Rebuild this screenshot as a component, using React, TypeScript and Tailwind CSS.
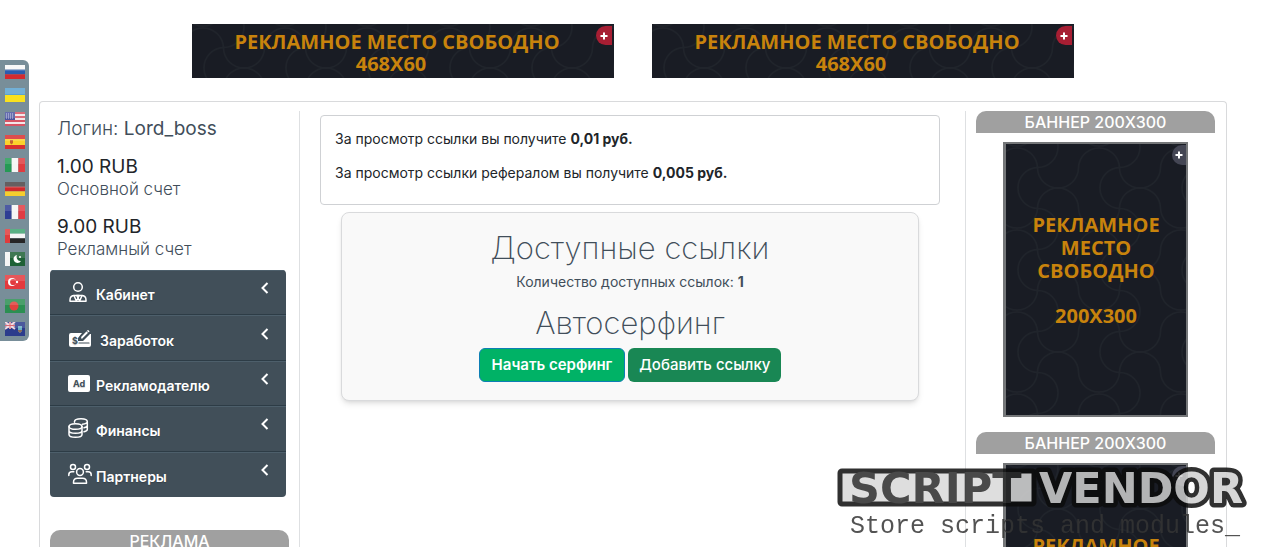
import { useId } from "react";
import type { ReactNode } from "react";

function Stripes({ colors, vertical = false }: { colors: string[]; vertical?: boolean }) {
  const size = (vertical ? 20 : 14) / colors.length;
  return (
    <>
      {colors.map((color, i) => (
        <rect
          key={i}
          x={vertical ? i * size : 0}
          y={vertical ? 0 : i * size}
          width={vertical ? size : 20}
          height={vertical ? 14 : size}
          fill={color}
        />
      ))}
    </>
  );
}

const flags: { name: string; art: ReactNode }[] = [
  { name: "Русский", art: <Stripes colors={["#f7f7f7", "#2b5cae", "#d42a2f"]} /> },
  { name: "Українська", art: <Stripes colors={["#5aa3d0", "#f9e11e"]} /> },
  {
    name: "English",
    art: (
      <>
        <Stripes colors={["#d65464", "#f3e6e8", "#d65464", "#f3e6e8", "#d65464", "#f3e6e8", "#d65464"]} />
        <rect width="10" height="8" fill="#4c55a0" />
        <path d="M1 2h8M1 4h8M1 6h8" stroke="#c9cde8" strokeDasharray="1 1" />
      </>
    ),
  },
  {
    name: "Español",
    art: (
      <>
        <rect width="20" height="14" fill="#d8302f" />
        <rect y="4" width="20" height="6" fill="#fbd12b" />
        <path d="M5 5h3v3l-1.500 1.500L5 8z" fill="#c4622f" />
      </>
    ),
  },
  { name: "Italiano", art: <Stripes vertical colors={["#259a55", "#f5f5f5", "#df3c40"]} /> },
  { name: "Deutsch", art: <Stripes colors={["#4b4446", "#cf2b2d", "#f6ce2d"]} /> },
  { name: "Français", art: <Stripes vertical colors={["#2f3f94", "#f5f5f5", "#df3c44"]} /> },
  {
    name: "العربية",
    art: (
      <>
        <Stripes colors={["#3ea36f", "#f5f5f5", "#262626"]} />
        <rect width="5" height="14" fill="#e03c3c" />
      </>
    ),
  },
  {
    name: "اردو",
    art: (
      <>
        <rect width="20" height="14" fill="#1d6136" />
        <rect width="5" height="14" fill="#f5f5f5" />
        <path d="M12 3a4 4 0 1 0 4 6 4.200 4.200 0 0 1-4-6z" fill="#fff" />
        <circle cx="15" cy="5" r="1" fill="#fff" />
      </>
    ),
  },
  {
    name: "Türkçe",
    art: (
      <>
        <rect width="20" height="14" fill="#e23a3e" />
        <circle cx="7" cy="7" r="4" fill="#fff" />
        <circle cx="8.200" cy="7" r="3.100" fill="#e23a3e" />
        <circle cx="12" cy="7" r="1.200" fill="#fff" />
      </>
    ),
  },
  {
    name: "বাংলা",
    art: (
      <>
        <rect width="20" height="14" fill="#2b8f52" />
        <circle cx="9" cy="7" r="4.500" fill="#e0423f" />
      </>
    ),
  },
  {
    name: "Montserrat",
    art: (
      <>
        <rect width="20" height="14" fill="#2b3c8c" />
        <path d="M0 0l10 7M10 0L0 7M5 0v7M0 3.500h10" stroke="#f0d5dc" strokeWidth="2" />
        <path d="M5 0v7M0 3.500h10" stroke="#d4525f" />
        <path d="M13 4h4v5l-2 2-2-2z" fill="#6cb0c4" />
        <path d="M13 8h4v1l-2 2-2-2z" fill="#8a6a55" />
      </>
    ),
  },
];

function Icon({ width, children }: { width: number; children: ReactNode }) {
  return (
    <svg
      width={width}
      height="22"
      viewBox={`0 0 ${width} 22`}
      fill="none"
      stroke="#fff"
      strokeWidth="1.500"
      strokeLinecap="round"
      strokeLinejoin="round"
      aria-hidden="true"
    >
      {children}
    </svg>
  );
}

const menu = [
  {
    label: "Кабинет",
    icon: (
      <Icon width={24}>
        <circle cx="10" cy="6" r="4.300" />
        <path d="M2 20.200v-1.200c0-3 2-4.500 4.500-4.500h7c2.500 0 4.500 1.500 4.500 4.500v1.200z" />
        <path d="M6 14.500l2.300 5.500L10 17l1.700 3L14 14.500M8.800 14.500h2.400L10 17z" />
      </Icon>
    ),
  },
  {
    label: "Заработок",
    icon: (
      <Icon width={28}>
        <path d="M3 6h11l-4 5v3h5l7-7h1v11q0 2-2 2H3q-2 0-2-2V8q0-2 2-2z" fill="#fff" stroke="none" />
        <path d="M12 12.500l.6-3L20 1.800l2.700 2.600-7.600 7.500z" fill="#fff" stroke="#414f59" />
        <path d="M18.300 3.700l2.500 2.500" stroke="#414f59" strokeWidth="1" />
        <path d="M11 16h10" stroke="#414f59" strokeWidth="1.200" />
        <text x="4" y="17" fill="#414f59" stroke="none" fontSize="9" fontWeight="700" fontFamily="Inter, sans-serif">
          $
        </text>
      </Icon>
    ),
  },
  {
    label: "Рекламодателю",
    icon: (
      <Icon width={24}>
        <rect x="0" y="3" width="22" height="17" rx="2" fill="#fff" stroke="none" />
        <text x="5" y="15" fill="#414f59" stroke="none" fontSize="9" fontWeight="700" fontFamily="Inter, sans-serif">
          Ad
        </text>
      </Icon>
    ),
  },
  {
    label: "Финансы",
    icon: (
      <Icon width={24}>
        <ellipse cx="7.500" cy="9.500" rx="6.500" ry="2.800" />
        <path d="M1 9.500v8c0 1.600 3 2.800 6.500 2.800s6.500-1.200 6.500-2.800v-8M1 13.500c0 1.600 3 2.800 6.500 2.800s6.500-1.200 6.500-2.800" />
        <path d="M6.500 4.500c0-1.600 3-2.800 6.500-2.800s6.300 1.200 6.300 2.800S17 7 14.500 7.200M19.300 4.500v8c0 1-1.500 1.900-3.300 2.300M19.300 8.500c0 1-1.500 1.900-3.300 2.300M6.500 4.500v.8" />
      </Icon>
    ),
  },
  {
    label: "Партнеры",
    icon: (
      <Icon width={24}>
        <circle cx="12" cy="9" r="3.400" />
        <path d="M5.500 20.300v-1c0-2.500 1.500-4 4-4h5c2.500 0 4 1.500 4 4v1z" />
        <circle cx="5" cy="4" r="2.500" />
        <circle cx="19" cy="4" r="2.500" />
        <path d="M.8 12.500v-.8c0-2 1-3 3-3h2M23.200 12.500v-.8c0-2-1-3-3-3h-2" />
      </Icon>
    ),
  },
];

// dark wavy background shared by all the free ad slots
function Waves() {
  const id = useId();
  return (
    <svg className="absolute inset-0 size-full" aria-hidden="true">
      <defs>
        <pattern id={id} width="82" height="82" patternUnits="userSpaceOnUse" x="11" y="3">
          <g fill="none" stroke="#20242b" strokeWidth="1.500">
            <path d="M0 1A20.500 20.500 0 0 1 20.500 21A20.500 20.500 0 0 0 41 41A20.500 20.500 0 0 0 61.500 21A20.500 20.500 0 0 1 82 1" />
            <path d="M0 81A20.500 20.500 0 0 0 20.500 61A20.500 20.500 0 0 1 41 41A20.500 20.500 0 0 1 61.500 61A20.500 20.500 0 0 0 82 81" />
            <path d="M41 0A20.500 20.500 0 0 1 20.500 20.500A20.500 20.500 0 0 0 1 41A20.500 20.500 0 0 0 20.500 61.500A20.500 20.500 0 0 1 41 82" />
          </g>
        </pattern>
      </defs>
      <rect width="100%" height="100%" fill="#191c24" />
      <rect width="100%" height="100%" fill={`url(#${id})`} />
    </svg>
  );
}

function Plus() {
  return (
    <svg width="8" height="8" viewBox="0 0 8 8" aria-hidden="true">
      <path d="M4 0.500v7M.5 4h7" stroke="#fff" strokeWidth="2" />
    </svg>
  );
}

function WideBanner() {
  return (
    <a
      href="#ad"
      className="relative block h-[54px] w-[422px] pt-[7px] pr-3 text-center font-['Open_Sans',sans-serif] text-xl leading-[22px] font-bold text-[#c8830c]"
    >
      <Waves />
      <span className="relative block">РЕКЛАМНОЕ МЕСТО СВОБОДНО</span>
      <span className="relative block pr-3">468X60</span>
      <span className="absolute top-[2px] right-[2px] flex h-[19px] w-4 items-center justify-center rounded-l-full bg-[#a71e33]">
        <Plus />
      </span>
    </a>
  );
}

function TallBanner() {
  return (
    <a
      href="#ad"
      className="relative mx-auto mt-[9px] mb-[15px] block h-[275px] w-[185px] border-2 border-l-3 border-[#757779] pt-[69px] text-center font-['Open_Sans',sans-serif] text-xl leading-[23px] font-bold text-[#c8830c]"
    >
      <Waves />
      <span className="relative block">РЕКЛАМНОЕ</span>
      <span className="relative block">МЕСТО</span>
      <span className="relative block">СВОБОДНО</span>
      <span className="relative mt-[22px] block">200X300</span>
      <span className="absolute top-px right-0 flex h-5 w-[14px] items-center justify-center rounded-l-full bg-[#444654]">
        <Plus />
      </span>
    </a>
  );
}

function Title({ children }: { children: ReactNode }) {
  return (
    <h3 className="h-[22px] w-[239px] rounded-t-[10px] bg-[#a0a0a0] text-center text-base leading-[22px] font-medium text-white">
      {children}
    </h3>
  );
}

function Balance({ amount, name }: { amount: string; name: string }) {
  return (
    <div className="mt-4 leading-[22px]">
      <div className="text-[19px] leading-[22px] text-[#212529]">{amount}</div>
      <div className="text-[17px] leading-[22px] font-light">{name}</div>
    </div>
  );
}

function Watermark() {
  return (
    <div className="pointer-events-none fixed right-[11px] bottom-[2px] opacity-85">
      <svg width="420" height="42" viewBox="0 0 420 42" role="img" aria-label="SCRIPTVENDOR">
        <rect x="3" y="4" width="194" height="33" rx="2" fill="#d9d9d9" stroke="#0c0c0c" strokeWidth="5" />
        <g fontFamily="'DejaVu Sans', sans-serif" fontWeight="700" fontSize="43">
          <text x="202" y="36" fill="#cfcfcf" stroke="#0c0c0c" strokeWidth="9" strokeLinejoin="round" paintOrder="stroke">
            VENDOR
          </text>
          <text x="12" y="36" fill="#2a2a2a">
            SCRIPT
          </text>
        </g>
      </svg>
      <div className="pl-[13px] font-['Liberation_Mono',monospace] text-[25px] leading-9 text-[#353535]">
        Store scripts and modules_
      </div>
    </div>
  );
}

export default function App() {
  return (
    <div className="flex h-screen flex-col overflow-hidden bg-white font-[Inter,sans-serif] text-sm text-[#414e5a]">
      <nav
        aria-label="Язык"
        className="fixed top-[60px] left-0 grid h-[281px] w-[29px] grid-rows-12 justify-items-center rounded-r-md bg-[#788e99]"
      >
        {flags.map((flag) => (
          <a key={flag.name} href="#lang" aria-label={flag.name} className="flex items-center">
            <svg width="20" height="14" viewBox="0 0 20 14" aria-hidden="true">
              {flag.art}
              <rect width="20" height="6" fill="#fff" opacity="0.15" />
            </svg>
          </a>
        ))}
      </nav>

      <header className="flex shrink-0 justify-center gap-[38px] pt-6 pr-[2px] pb-[23px]">
        <WideBanner />
        <WideBanner />
      </header>

      <main className="mr-[41px] ml-[39px] flex shrink-0 rounded-t border border-b-0 border-[#d9dadc] px-[10px] pt-[9px]">
        <aside className="w-[250px] shrink-0 border-r border-[#dee0e2]">
          <div className="px-[7px] pt-[7px]">
            <div className="text-[19px] leading-[22px] font-light">
              Логин: <span className="font-normal">Lord_boss</span>
            </div>
            <Balance amount="1.00 RUB" name="Основной счет" />
            <Balance amount="9.00 RUB" name="Рекламный счет" />
          </div>

          <nav aria-label="Меню" className="mt-[10px] mb-[33px] grid h-[227px] w-[236px] grid-rows-5 overflow-hidden rounded bg-[#414f59]">
            {menu.map((item) => (
              <button
                key={item.label}
                type="button"
                className="flex items-center gap-1 border-b border-[#2d3c46] pr-[17px] pl-[18px] text-left text-sm font-semibold text-white shadow-[inset_0_1px_#4d5f6b] text-shadow-xs last:border-b-0"
              >
                {item.icon}
                <span className="flex-1 pt-1.5">{item.label}</span>
                <svg width="8" height="12" viewBox="0 0 8 12" className="mb-2" aria-hidden="true">
                  <path d="M6.500 1L1.500 6l5 5" fill="none" stroke="#fff" strokeWidth="2" />
                </svg>
              </button>
            ))}
          </nav>

          <Title>РЕКЛАМА</Title>
        </aside>

        <section className="min-w-0 flex-1 pt-1 pr-[25px] pl-5">
          <div className="rounded border border-[#cfd1d4] px-[14px] pt-[13px] pb-[21px] text-[#212529]">
            <p className="mb-[14px]">
              За просмотр ссылки вы получите <b>0,01 руб.</b>
            </p>
            <p>
              За просмотр ссылки рефералом вы получите <b>0,005 руб.</b>
            </p>
          </div>

          <div className="mx-[21px] mt-[7px] rounded-lg border border-[#d9dadc] bg-[#f9f9f9] pt-[18px] pb-[18px] text-center shadow-md">
            <h2 className="text-[31px] leading-[34px] font-extralight">Доступные ссылки</h2>
            <p className="mt-[7px] mb-3">
              Количество доступных ссылок: <b>1</b>
            </p>
            <h2 className="text-[31px] leading-[38px] font-extralight">Автосерфинг</h2>
            <div className="mt-[6px] flex justify-center gap-[3px]">
              <button type="button" className="h-[34px] rounded-md border border-[#0d7fb5] bg-[#00b266] px-3 text-[15px] font-semibold text-white">
                Начать серфинг
              </button>
              <button type="button" className="h-[34px] rounded-md bg-[#198754] px-[11px] text-[15px] font-medium text-white">
                Добавить ссылку
              </button>
            </div>
          </div>
        </section>

        <aside className="w-[251px] shrink-0 border-l border-[#dee0e2] pl-[10px]">
          <div className="w-[239px]">
            <Title>БАННЕР 200X300</Title>
            <TallBanner />
            <Title>БАННЕР 200X300</Title>
            <TallBanner />
          </div>
        </aside>
      </main>

      <Watermark />
    </div>
  );
}
